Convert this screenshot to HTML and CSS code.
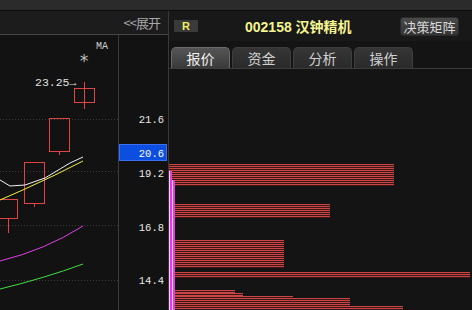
FILE: index.html
```
<!DOCTYPE html>
<html lang="zh">
<head>
<meta charset="UTF-8" />
<title>汉钟精机 002158</title>
<link rel="stylesheet" href="styles.css">
</head>
<body>
<div class="top-strip"></div>

<div class="main">
  <div class="left">
    <div class="left-head"><span class="expand">&lt;&lt;展开</span></div>
    <!-- kline canvas, drawn in page coordinates -->
    <svg class="kline" width="168" height="275" viewBox="0 35 168 275">
      <line class="axis-line" x1="118.5" y1="35" x2="118.5" y2="310" />
      <g class="grid">
        <line x1="0" y1="119.5" x2="118" y2="119.5" />
        <line x1="0" y1="171.5" x2="118" y2="171.5" />
        <line x1="0" y1="225.5" x2="118" y2="225.5" />
        <line x1="0" y1="280.5" x2="118" y2="280.5" />
      </g>
      <text class="ma-label" x="96" y="49">MA</text>
      <text class="star" x="79" y="67">*</text>
      <text class="high-label" x="35" y="86">23.25→</text>

      <g class="candle">
        <line x1="84.5" y1="82" x2="84.5" y2="109" />
        <rect x="74.5" y="88.5" width="20" height="14" />
        <line x1="59.5" y1="151" x2="59.5" y2="155" />
        <rect x="49.5" y="118.5" width="20" height="33" />
        <line x1="34.5" y1="203" x2="34.5" y2="207" />
        <rect x="24.5" y="162.5" width="20" height="41" />
        <line x1="8.5" y1="218" x2="8.5" y2="233" />
        <rect x="-1.5" y="199.5" width="19" height="19" />
      </g>

      <path class="ma ma-white" d="M0,180 L10,186 L25,185 L45,178 L70,163 L83,157" />
      <path class="ma ma-yellow" d="M0,200 L25,189 L55,175 L83,161" />
      <path class="ma ma-pink" d="M0,261 Q45,250 83,226" />
      <path class="ma ma-green" d="M0,289 Q45,278 83,264" />

      <g class="axis-text">
        <text x="164" y="123">21.6</text>
        <text x="164" y="177">19.2</text>
        <text x="164" y="231">16.8</text>
        <text x="164" y="284">14.4</text>
      </g>
      <rect class="cur-box" x="119.5" y="144.5" width="47" height="16" />
      <text class="cur-text" x="164" y="157">20.6</text>
    </svg>
  </div>

  <div class="right">
    <div class="stock-head">
      <span class="badge">R</span>
      <span class="stock-name">002158 汉钟精机</span>
      <button class="btn">决策矩阵</button>
    </div>
    <div class="tabs">
      <span class="tab active">报价</span>
      <span class="tab">资金</span>
      <span class="tab">分析</span>
      <span class="tab">操作</span>
    </div>
    <div class="depth">
      <div class="bar" style="top:95px;width:225px;height:22px"></div>
      <div class="bar" style="top:135px;width:161px;height:14px"></div>
      <div class="bar" style="top:171px;width:115px;height:28px"></div>
      <div class="bar" style="top:203px;width:301px;height:6px"></div>
      <div class="bar" style="top:221px;width:66px;height:20px"></div>
      <div class="bar" style="top:224px;width:74px;height:17px"></div>
      <div class="bar" style="top:227px;width:124px;height:14px"></div>
      <div class="bar" style="top:229px;width:181px;height:12px"></div>
      <div class="bar" style="top:237px;width:234px;height:4px"></div>
      <div class="vol vol-a"></div>
      <div class="vol vol-b"></div>
    </div>
  </div>
</div>
</body>
</html>
```

FILE: styles.css
```
body {
    margin: 0;
    padding: 0;
    width: 472px;
    height: 310px;
    overflow: hidden;
    background-color: #141414;
    color: #ddd;
    font-family: 'Liberation Sans', 'Noto Sans CJK SC', sans-serif;
}

.top-strip {
    height: 10px;
    background-color: #2b2b2b;
    border-bottom: 1px solid #0b0b0b;
}

.main {
    display: flex;
    height: 299px;
}

.left {
    width: 168px;
    border-right: 1px solid #383838;
    display: flex;
    flex-direction: column;
    background-color: #121212;
}

.left-head {
    height: 23px;
    background-color: #1c1c1c;
    border-bottom: 1px solid #454545;
    display: flex;
    align-items: center;
    justify-content: flex-end;
    padding-right: 8px;
}

.expand {
    font-size: 13px;
    color: #a8a8a8;
    font-family: 'Noto Sans CJK SC', sans-serif;
    letter-spacing: -1px;
}

.kline {
    display: block;
}

.axis-line {
    stroke: #3a3a3a;
    stroke-width: 1;
}

.grid line {
    stroke: #3c3c3c;
    stroke-width: 1;
    stroke-dasharray: 1 2;
}

.ma-label {
    font-family: 'Liberation Mono', monospace;
    font-size: 10px;
    fill: #cfcfcf;
}

.star {
    font-family: 'DejaVu Sans Mono', monospace;
    font-size: 17px;
    fill: #bdbdbd;
}

.high-label {
    font-family: 'Liberation Mono', monospace;
    font-size: 11.5px;
    fill: #e0e0e0;
}

.candle line,
.candle rect {
    stroke: #e04444;
    stroke-width: 1;
    fill: none;
}

.ma {
    fill: none;
    stroke-width: 1;
}
.ma-white { stroke: #f2f2f2; }
.ma-yellow { stroke: #f0f040; }
.ma-pink { stroke: #e040e8; }
.ma-green { stroke: #40e040; }

.axis-text text,
.cur-text {
    font-family: 'Liberation Mono', monospace;
    font-size: 10.5px;
    fill: #e8e8e8;
    text-anchor: end;
}

.cur-box {
    fill: #0c4fe0;
    stroke: #3a70f0;
    stroke-width: 1;
}

.cur-text {
    fill: #ffffff;
}

.right {
    flex: 1;
    display: flex;
    flex-direction: column;
    background-color: #141414;
}

.stock-head {
    height: 30px;
    display: flex;
    align-items: center;
    padding: 0 13px 0 5px;
    background-color: #181818;
}

.badge {
    width: 24px;
    height: 12px;
    background-color: #3a3a3a;
    color: #f0f060;
    font-size: 11px;
    font-weight: bold;
    line-height: 12px;
    text-align: center;
}

.stock-name {
    margin-left: 47px;
    font-size: 14px;
    font-weight: bold;
    color: #f4f490;
    font-family: 'Liberation Sans', 'Noto Sans CJK SC', sans-serif;
}

.btn {
    margin-left: auto;
    width: 59px;
    height: 19px;
    padding: 0;
    border: 1px solid #2a2a2a;
    border-radius: 3px;
    background: linear-gradient(#4a4a4a, #333);
    color: #d8d8d8;
    font-size: 13px;
    font-family: 'Noto Sans CJK SC', sans-serif;
    line-height: 17px;
}

.tabs {
    display: flex;
    gap: 2px;
    margin-top: 6px;
    padding-left: 2px;
    height: 21px;
    border-bottom: 1px solid #3c3c3c;
}

.tab {
    width: 59px;
    box-sizing: border-box;
    border: 1px solid #3e3e3e;
    border-bottom: none;
    border-radius: 5px 5px 0 0;
    background: linear-gradient(#363636, #2a2a2a);
    color: #d0d0d0;
    font-size: 14px;
    font-family: 'Noto Sans CJK SC', sans-serif;
    line-height: 20px;
    text-align: center;
}

.tab.active {
    background: linear-gradient(#555, #3a3a3a);
    border-color: #6a6a6a;
    color: #f0f0f0;
}

.depth {
    flex: 1;
    position: relative;
    overflow: hidden;
}

.bar {
    position: absolute;
    left: 0;
    background: repeating-linear-gradient(to bottom, #c84646 0 1px, #3e1515 1px 2px);
}

.vol {
    position: absolute;
    width: 2px;
    bottom: 0;
    border-left: 1px solid #f4d0f4;
    background-color: #e03ee0;
}
.vol-a { left: 0; top: 102px; }
.vol-b { left: 3px; top: 111px; }
```
